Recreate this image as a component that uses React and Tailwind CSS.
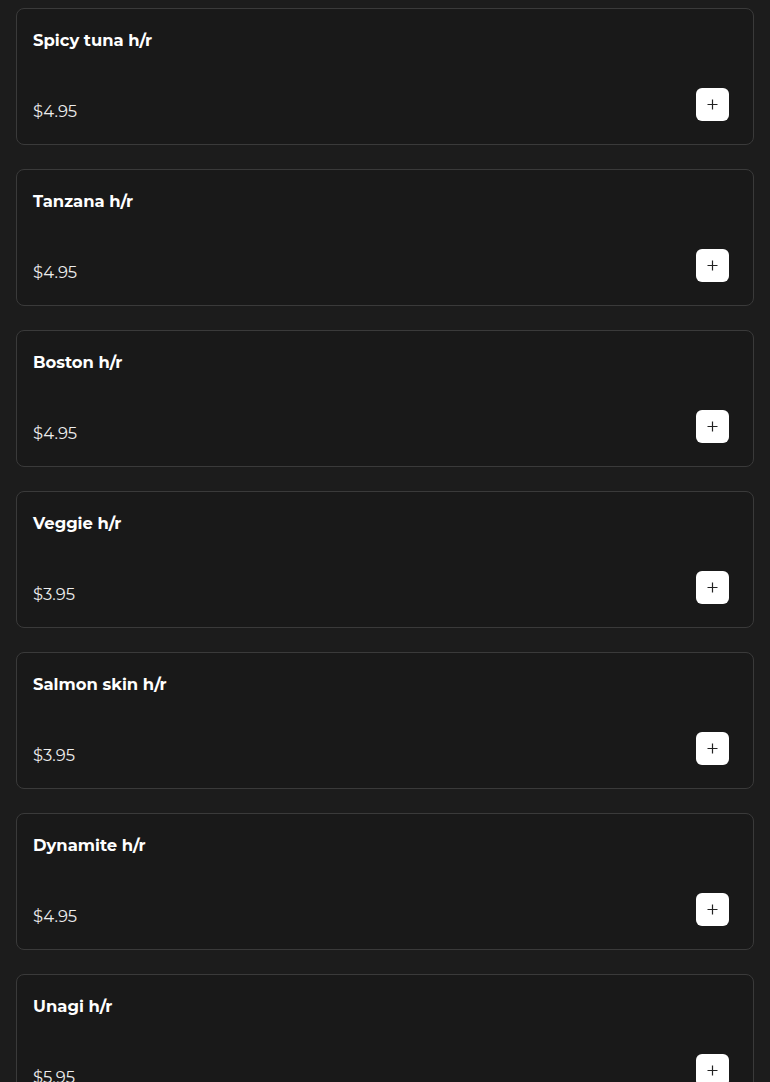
import React from "react";

const items = [
  ["Spicy tuna h/r", "$4.95"],
  ["Tanzana h/r", "$4.95"],
  ["Boston h/r", "$4.95"],
  ["Veggie h/r", "$3.95"],
  ["Salmon skin h/r", "$3.95"],
  ["Dynamite h/r", "$4.95"],
  ["Unagi h/r", "$5.95"],
];

function Plus() {
  return (
    <svg width="11" height="11" viewBox="0 0 11 11" fill="none">
      <path d="M5.5 0.5v10M0.5 5.5h10" stroke="#222" strokeWidth="1.2" />
    </svg>
  );
}

export default function App() {
  return (
    <div
      className="min-h-[1082px] bg-[#1c1c1c] px-4 pt-2 pb-4 flex flex-col gap-6"
      style={{ fontFamily: "Montserrat, 'Open Sans', Inter, sans-serif" }}
    >
      {items.map(([name, price]) => (
        <div
          key={name}
          className="h-[137px] shrink-0 rounded-lg border border-[#3a3a3a] bg-[#191919] p-4 flex flex-col justify-between"
        >
          <div className="text-[16.4px] leading-[30px] font-bold text-white">{name}</div>
          <div className="flex items-end justify-between">
            <div className="text-[16.4px] leading-[34px] text-[#ededed]">{price}</div>
            <button className="mb-[7px] mr-2 w-[33px] h-[33px] rounded-md bg-white flex items-center justify-center">
              <Plus />
            </button>
          </div>
        </div>
      ))}
    </div>
  );
}
